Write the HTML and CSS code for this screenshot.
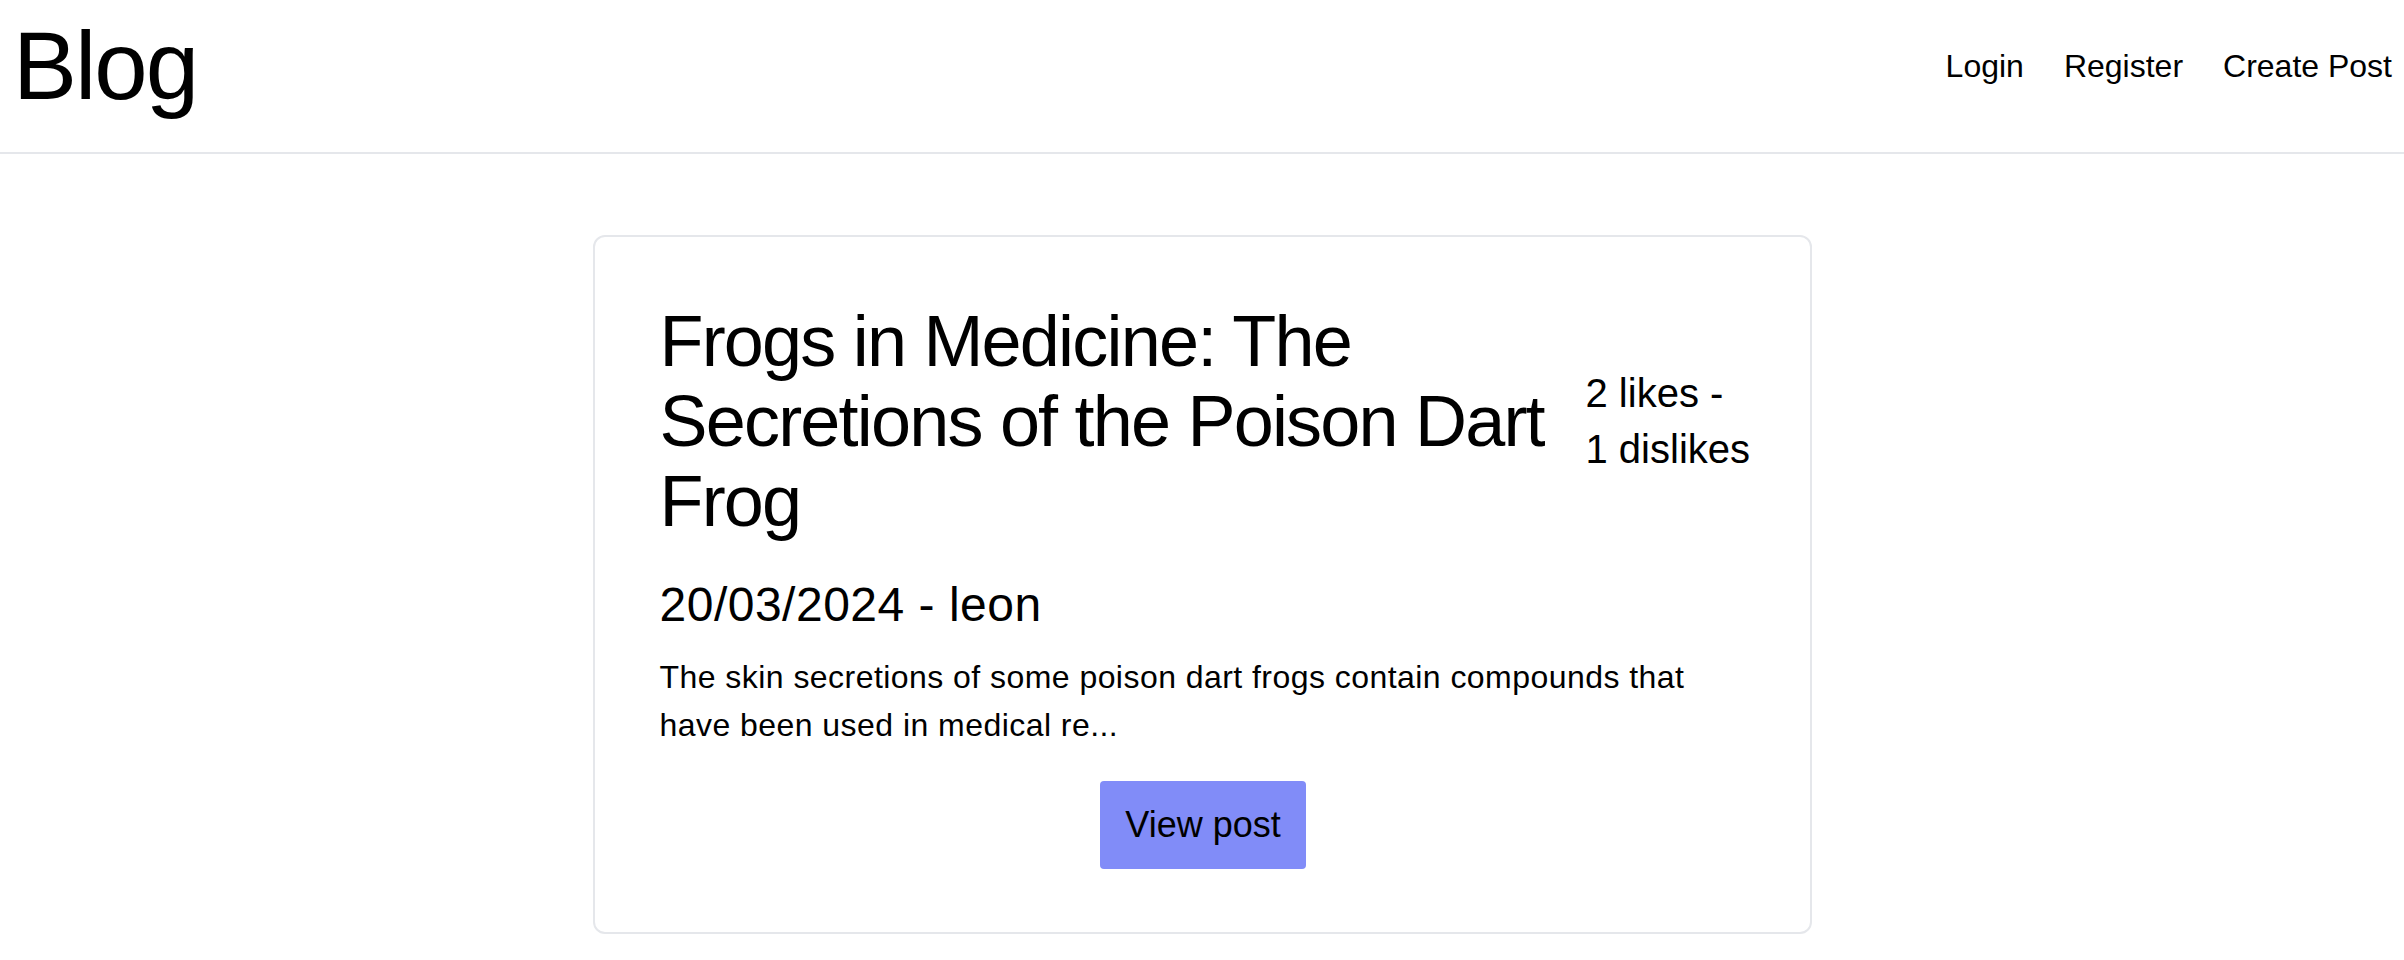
FILE: index.html
```html
<!DOCTYPE html>
<html lang="en">
<head>
<meta charset="utf-8">
<title>Blog</title>
<link rel="stylesheet" href="styles.css">
</head>
<body>
<header class="site-header">
  <h1 class="brand">Blog</h1>
  <nav class="nav">
    <a href="#" class="nav-link">Login</a>
    <a href="#" class="nav-link">Register</a>
    <a href="#" class="nav-link">Create Post</a>
  </nav>
</header>
<main class="main">
  <article class="card">
    <div class="card-head">
      <h2 class="post-title">Frogs in Medicine: The Secretions of the Poison Dart Frog</h2>
      <p class="reactions">2 likes - 1 dislikes</p>
    </div>
    <h3 class="meta">20/03/2024 - leon</h3>
    <p class="excerpt">The skin secretions of some poison dart frogs contain compounds that have been used in medical re...</p>
    <div class="actions">
      <a href="#" class="btn">View post</a>
    </div>
  </article>
</main>
</body>
</html>
```
FILE: styles.css
```css
* { box-sizing: border-box; }
html, body { margin: 0; padding: 0; background: #ffffff; }
body {
  font-family: "Liberation Sans", Arial, Helvetica, sans-serif;
  color: #000000;
}
.site-header {
  display: flex;
  justify-content: space-between;
  align-items: flex-start;
  padding: 18px 12px 38px 13px;
  border-bottom: 2px solid #e5e7eb;
}
.brand {
  margin: 0;
  font-size: 96px;
  line-height: 96px;
  font-weight: 400;
  letter-spacing: -2px;
}
.nav {
  display: flex;
  gap: 40px;
  margin-top: 24px;
}
.nav-link {
  font-size: 32px;
  line-height: 48px;
  color: #000;
  text-decoration: none;
}
.main {
  padding-top: 81px;
}
.card {
  width: 1219px;
  margin: 0 auto;
  border: 2px solid #e5e7eb;
  border-radius: 12px;
  padding: 64px 58px 63px 65px;
}
.card-head {
  display: flex;
  align-items: center;
  gap: 28px;
}
.post-title {
  flex: 1;
  margin: 0;
  font-size: 72px;
  line-height: 80px;
  font-weight: 400;
  letter-spacing: -1.8px;
}
.reactions {
  flex: 0 0 166px;
  width: 166px;
  margin: 0;
  font-size: 40px;
  line-height: 56px;
}
.meta {
  margin: 32px 0 0 0;
  font-size: 48px;
  line-height: 64px;
  font-weight: 400;
  letter-spacing: 0.5px;
}
.excerpt {
  margin: 16px 0 0 0;
  font-size: 32px;
  line-height: 48px;
  letter-spacing: 0.45px;
}
.actions {
  display: flex;
  justify-content: center;
  margin-top: 32px;
  margin-left: -5px;
}
.btn {
  display: inline-block;
  background: #818cf8;
  color: #000;
  text-decoration: none;
  font-size: 36px;
  line-height: 56px;
  padding: 16px 25px;
  border-radius: 4px;
}
```
